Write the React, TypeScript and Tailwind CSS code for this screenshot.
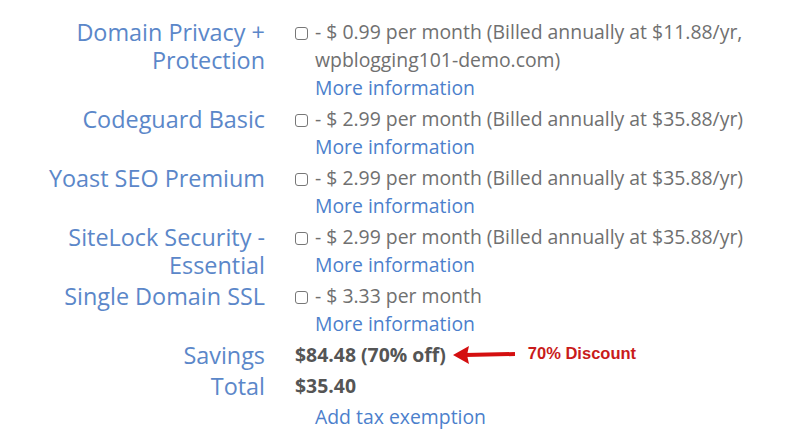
import React from "react";

const label = "text-right text-[#5b87c9] text-[23.4px] leading-[28px]";
const body = "text-[#707070] text-[19.4px] leading-[28px]";
const link = "text-[#4c7fcc] text-[19.4px] leading-[28px]";

function Box() {
  return (
    <span className="mt-[9px] mr-[7px] inline-block h-[13px] w-[13px] shrink-0 rounded-[3px] border border-[#777] bg-white" />
  );
}

function Row({ name, price, more = true }: { name: React.ReactNode; price: React.ReactNode; more?: boolean }) {
  return (
    <>
      <div className={label}>{name}</div>
      <div className="flex">
        <Box />
        <div className="flex flex-col">
          <div className={body}>{price}</div>
          {more && <div className={link}>More information</div>}
        </div>
      </div>
    </>
  );
}

export default function App() {
  return (
    <div className="h-[446px] w-[800px] bg-white" style={{ fontFamily: '"Open Sans", sans-serif' }}>
      <div className="grid grid-cols-[265px_1fr] gap-x-[30px] gap-y-[3px] pt-[18px]">
        <Row
          name={
            <>
              Domain Privacy +<br />
              Protection
            </>
          }
          price={
            <>
              - $ 0.99 per month (Billed annually at $11.88/yr,
              <br />
              wpblogging101-demo.com)
            </>
          }
        />
        <Row name="Codeguard Basic" price="- $ 2.99 per month (Billed annually at $35.88/yr)" />
        <Row name="Yoast SEO Premium" price="- $ 2.99 per month (Billed annually at $35.88/yr)" />
        <Row
          name={
            <>
              SiteLock Security -<br />
              Essential
            </>
          }
          price="- $ 2.99 per month (Billed annually at $35.88/yr)"
        />
        <Row name="Single Domain SSL" price="- $ 3.33 per month" />
        <div className={label}>Savings</div>
        <div className="flex items-center">
          <span className="text-[19.4px] leading-[28px] font-bold text-[#555]">$84.48 (70% off)</span>
          <svg width="62" height="20" viewBox="0 0 62 20" className="ml-[7px]">
            <line x1="12" y1="10" x2="62" y2="9" stroke="#d40f10" strokeWidth="4" />
            <polygon points="0,10 16,1 14,10 16,19" fill="#d40f10" />
          </svg>
          <span
            className="ml-[13px] -mt-[4px] text-[16.5px] font-bold text-[#c91b1b]"
            style={{ fontFamily: '"Liberation Sans", Arial, sans-serif' }}
          >
            70% Discount
          </span>
        </div>
        <div className={label}>Total</div>
        <div className="text-[19.4px] leading-[28px] font-bold text-[#555]">$35.40</div>
        <div />
        <div className={`${link} pl-[20px]`}>Add tax exemption</div>
      </div>
    </div>
  );
}
